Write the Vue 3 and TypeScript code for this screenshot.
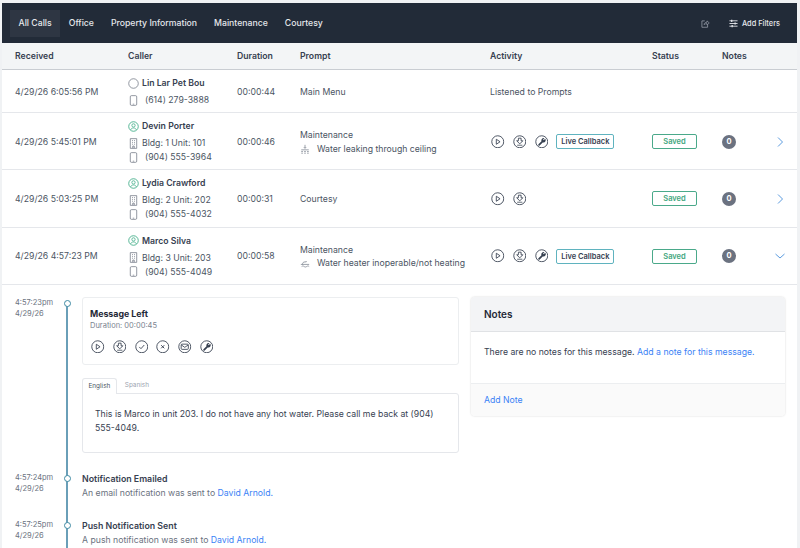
<script setup lang="ts">
type IconName = 'play' | 'download' | 'wrench' | 'check' | 'cross' | 'mail'

interface Call {
  id: number
  received: string
  caller: string
  known: boolean
  unit?: string
  phone: string
  duration: string
  prompt: string
  issue?: string
  issueIcon?: 'leak' | 'heater'
  activityText?: string
  actions: IconName[]
  liveCallback?: boolean
  saved?: boolean
  open?: boolean
}

const tabs = ['All Calls', 'Office', 'Property Information', 'Maintenance', 'Courtesy']
const columns = ['Received', 'Caller', 'Duration', 'Prompt', 'Activity', 'Status', 'Notes']

const calls: Call[] = [
  {
    id: 1,
    received: '4/29/26 6:05:56 PM',
    caller: 'Lin Lar Pet Bou',
    known: false,
    phone: '(614) 279-3888',
    duration: '00:00:44',
    prompt: 'Main Menu',
    activityText: 'Listened to Prompts',
    actions: [],
  },
  {
    id: 2,
    received: '4/29/26 5:45:01 PM',
    caller: 'Devin Porter',
    known: true,
    unit: 'Bldg: 1 Unit: 101',
    phone: '(904) 555-3964',
    duration: '00:00:46',
    prompt: 'Maintenance',
    issue: 'Water leaking through ceiling',
    issueIcon: 'leak',
    actions: ['play', 'download', 'wrench'],
    liveCallback: true,
    saved: true,
  },
  {
    id: 3,
    received: '4/29/26 5:03:25 PM',
    caller: 'Lydia Crawford',
    known: true,
    unit: 'Bldg: 2 Unit: 202',
    phone: '(904) 555-4032',
    duration: '00:00:31',
    prompt: 'Courtesy',
    actions: ['play', 'download'],
    saved: true,
  },
  {
    id: 4,
    received: '4/29/26 4:57:23 PM',
    caller: 'Marco Silva',
    known: true,
    unit: 'Bldg: 3 Unit: 203',
    phone: '(904) 555-4049',
    duration: '00:00:58',
    prompt: 'Maintenance',
    issue: 'Water heater inoperable/not heating',
    issueIcon: 'heater',
    actions: ['play', 'download', 'wrench'],
    liveCallback: true,
    saved: true,
    open: true,
  },
]

const messageActions: IconName[] = ['play', 'download', 'check', 'cross', 'mail', 'wrench']
</script>

<template>
  <div class="page">
    <svg class="defs" width="0" height="0" aria-hidden="true">
      <symbol id="i-play" viewBox="0 0 14 14">
        <circle cx="7" cy="7" r="6.2" fill="none" stroke="currentColor" stroke-width=".9" />
        <path d="M5.5 4.4 9.4 7 5.5 9.6Z" fill="none" stroke="currentColor" stroke-width=".9" stroke-linejoin="round" />
      </symbol>
      <symbol id="i-download" viewBox="0 0 14 14">
        <circle cx="7" cy="7" r="6.2" fill="none" stroke="currentColor" stroke-width=".9" />
        <path d="M5.6 3.3h2.800v2.700h1.800L7 9.200 3.800 6h1.800Z" fill="none" stroke="currentColor" stroke-width=".9" stroke-linejoin="round" />
        <path d="M4.300 10.600h5.400" fill="none" stroke="currentColor" stroke-width=".8" />
      </symbol>
      <symbol id="i-wrench" viewBox="0 0 14 14">
        <circle cx="7" cy="7" r="6.2" fill="none" stroke="currentColor" stroke-width=".9" />
        <path d="M10.600 3.900 9 5.400 8.300 4.800l1.500-1.500a2.400 2.400 0 0 0-3.100 3.100L3.600 9.500a.9.9 0 0 0 1.300 1.300l3.100-3.100a2.400 2.400 0 0 0 2.600-3.800Z" fill="currentColor" />
      </symbol>
      <symbol id="i-check" viewBox="0 0 14 14">
        <circle cx="7" cy="7" r="6.2" fill="none" stroke="currentColor" stroke-width=".9" />
        <path d="M4.400 7.200 6.200 9l3.400-3.800" fill="none" stroke="currentColor" stroke-width=".9" />
      </symbol>
      <symbol id="i-cross" viewBox="0 0 14 14">
        <circle cx="7" cy="7" r="6.2" fill="none" stroke="currentColor" stroke-width=".9" />
        <path d="M5.400 5.400 8.600 8.600M8.600 5.400 5.400 8.600" fill="none" stroke="currentColor" stroke-width="1" />
      </symbol>
      <symbol id="i-mail" viewBox="0 0 14 14">
        <circle cx="7" cy="7" r="6.2" fill="none" stroke="currentColor" stroke-width=".9" />
        <rect x="3.300" y="4.300" width="7.400" height="5.400" rx=".9" fill="none" stroke="currentColor" stroke-width=".9" />
        <path d="M3.500 5.200 7 7.600l3.500-2.400" fill="none" stroke="currentColor" stroke-width=".9" />
      </symbol>
      <symbol id="i-person" viewBox="0 0 12 12">
        <circle cx="6" cy="6" r="5.2" fill="none" stroke="currentColor" stroke-width="1" />
        <circle cx="6" cy="4.800" r="1.800" fill="none" stroke="currentColor" stroke-width=".9" />
        <path d="M2.900 9.600C3.500 8.200 4.600 7.600 6 7.600s2.500.6 3.100 2" fill="none" stroke="currentColor" stroke-width=".9" />
      </symbol>
      <symbol id="i-anon" viewBox="0 0 12 12">
        <circle cx="6" cy="6" r="5.200" fill="none" stroke="currentColor" stroke-width=".8" />
      </symbol>
      <symbol id="i-phone" viewBox="0 0 10 12">
        <rect x="1.500" y=".7" width="7" height="10.600" rx="1.300" fill="none" stroke="currentColor" stroke-width=".8" />
        <path d="M4.200 10h1.600" stroke="currentColor" stroke-width=".7" />
      </symbol>
      <symbol id="i-building" viewBox="0 0 10 12">
        <path d="M1.500.7h7v10.600h-7Z" fill="none" stroke="currentColor" stroke-width=".8" />
        <path d="M3.400 2.800h1M5.600 2.800h1M3.400 4.800h1M5.600 4.800h1M3.400 6.800h1M5.600 6.800h1M4.200 11V8.800h1.600V11" fill="none" stroke="currentColor" stroke-width=".8" />
      </symbol>
      <symbol id="i-leak" viewBox="0 0 12 12">
        <path d="M6 1v4M4.600 3.800 6 5.200l1.400-1.400M1.500 7h9M1.500 9h2M5 9h2M8.500 9h2M1.500 11h2M5 11h2M8.500 11h2" fill="none" stroke="currentColor" stroke-width=".8" />
      </symbol>
      <symbol id="i-heater" viewBox="0 0 12 12">
        <path d="M1 6.500h10M3 6.500C3 4.500 4 3.500 6 3.500h1.500M8 3.500 7 2.500M2 9c1-.8 2-.8 3 0s2 .8 3 0 2-.8 3 0" fill="none" stroke="currentColor" stroke-width=".8" />
      </symbol>
    </svg>

    <main class="panel">
      <nav class="topbar">
        <a v-for="(tab, i) in tabs" :key="tab" class="tab" :class="{ active: i === 0 }">{{ tab }}</a>
        <div class="tools">
          <svg class="share" viewBox="0 0 12 12" width="9" height="9">
            <path d="M5 2.500H1.200v8.500h7.600V7.500" fill="none" stroke="currentColor" />
            <path d="M4 7.500C4.300 5.400 5.800 4.300 8 4.300V2.500l3 2.800-3 2.700V6.200C6.300 6.200 5 6.500 4 7.500Z" fill="none" stroke="currentColor" stroke-width=".9" />
          </svg>
          <a class="filters">
            <svg viewBox="0 0 10 10" width="9" height="9">
              <path d="M.5 2h9M.5 5h9M.5 8h9" stroke="currentColor" />
              <path d="M3 .8v2.400M6.800 3.800v2.400M3.500 6.800v2.400" stroke="currentColor" stroke-width="1.400" />
            </svg>
            Add Filters
          </a>
        </div>
      </nav>

      <div class="row head">
        <span v-for="col in columns" :key="col">{{ col }}</span>
      </div>

      <div v-for="call in calls" :key="call.id" class="row">
        <span>{{ call.received }}</span>
        <div class="caller">
          <div class="name">
            <svg class="person" :class="{ known: call.known }"><use :href="call.known ? '#i-person' : '#i-anon'" /></svg>
            {{ call.caller }}
          </div>
          <div v-if="call.unit" class="line">
            <svg class="small"><use href="#i-building" /></svg>
            {{ call.unit }}
          </div>
          <div class="line">
            <svg class="small"><use href="#i-phone" /></svg>
            <span class="phone">{{ call.phone }}</span>
          </div>
        </div>
        <span>{{ call.duration }}</span>
        <div class="prompt">
          <div>{{ call.prompt }}</div>
          <div v-if="call.issue" class="issue">
            <svg class="issue-icon"><use :href="`#i-${call.issueIcon}`" /></svg>
            {{ call.issue }}
          </div>
        </div>
        <div class="activity">
          <span v-if="call.activityText">{{ call.activityText }}</span>
          <svg v-for="a in call.actions" :key="a" class="action"><use :href="`#i-${a}`" /></svg>
          <span v-if="call.liveCallback" class="badge live">Live Callback</span>
        </div>
        <div><span v-if="call.saved" class="badge saved">Saved</span></div>
        <div><span v-if="call.saved" class="count">0</span></div>
        <div class="chevron">
          <svg v-if="call.saved" viewBox="0 0 12 12" width="12" height="12">
            <path v-if="call.open" d="M1.500 4 6 8l4.500-4" fill="none" stroke="currentColor" />
            <path v-else d="M4 1.500 8.500 6 4 10.500" fill="none" stroke="currentColor" />
          </svg>
        </div>
      </div>

      <section class="detail">
        <div class="timeline">
          <div class="event first">
            <div class="when">4:57:23pm<br />4/29/26</div>
            <div class="rail"><i class="dot" /></div>
            <div>
              <div class="message">
                <h3>Message Left</h3>
                <p class="length">Duration: 00:00:45</p>
                <div class="msg-actions">
                  <svg v-for="a in messageActions" :key="a" class="action"><use :href="`#i-${a}`" /></svg>
                </div>
              </div>
              <div class="lang-tabs">
                <span class="lang active">English</span>
                <span class="lang">Spanish</span>
              </div>
              <div class="transcript">
                This is Marco in unit 203. I do not have any hot water. Please call me back at (904) 555-4049.
              </div>
            </div>
          </div>

          <div class="event">
            <div class="when">4:57:24pm<br />4/29/26</div>
            <div class="rail"><i class="dot" /></div>
            <div class="note">
              <h4>Notification Emailed</h4>
              <p>An email notification was sent to <a>David Arnold.</a></p>
            </div>
          </div>

          <div class="event last">
            <div class="when">4:57:25pm<br />4/29/26</div>
            <div class="rail"><i class="dot" /></div>
            <div class="note">
              <h4>Push Notification Sent</h4>
              <p>A push notification was sent to <a>David Arnold.</a></p>
            </div>
          </div>
        </div>

        <aside class="notes">
          <header>Notes</header>
          <div class="notes-body">
            There are no notes for this message. <a>Add a note for this message.</a>
          </div>
          <footer><a>Add Note</a></footer>
        </aside>
      </section>
    </main>
  </div>
</template>

<style scoped>
.page {
  height: 548px;
  overflow: hidden;
  box-sizing: border-box;
  padding: 3px 3px 0 2px;
  background: #f0f2f4;
  font-family: Inter, "Liberation Sans", sans-serif;
  font-size: 8.7px;
  color: #4b5563;
}

.defs {
  position: absolute;
}

.panel {
  background: #fff;
  height: 100%;
}

.topbar {
  display: flex;
  align-items: center;
  height: 40px;
  padding-left: 8px;
  box-sizing: border-box;
  background: #222b38;
}

.tab {
  padding: 9px 8.5px;
  line-height: 9px;
  font-weight: 500;
  color: #e5e7eb;
}

.tab.active {
  background: #2e3643;
}

.tools {
  display: flex;
  align-items: center;
  gap: 19px;
  margin-left: auto;
  padding-right: 17px;
  color: #9ca3af;
}

.filters {
  display: flex;
  align-items: center;
  gap: 3.5px;
  font-size: 7.4px;
  font-weight: 500;
  color: #e5e7eb;
}

.row {
  display: grid;
  grid-template-columns: 113px 109px 63px 190px 162px 70px 52px 1fr;
  align-items: center;
  padding: 6px 0 5.2px 13px;
  border-bottom: 1px solid #e5e7eb;
}

.row.head {
  padding: 0 0 0 13px;
  height: 27px;
  box-sizing: border-box;
  background: #f3f5f6;
  border-bottom: 1px solid #c9cdd2;
  font-weight: 600;
  color: #374151;
}

.name {
  display: flex;
  align-items: center;
  gap: 3px;
  height: 14px;
  margin-bottom: 3px;
  font-weight: 600;
  color: #374151;
}

.person {
  width: 11px;
  height: 11px;
  color: #6b7280;
}

.person.known {
  color: #48b08c;
}

.line {
  display: flex;
  align-items: center;
  gap: 3px;
  height: 14px;
}

.small {
  width: 11px;
  height: 11px;
  color: #6b7280;
}

.phone {
  margin-left: 3px;
}

.prompt {
  padding-top: 2px;
  line-height: 13.5px;
}

.issue {
  display: flex;
  align-items: center;
  gap: 7px;
}

.issue-icon {
  width: 10px;
  height: 10px;
  color: #6b7280;
}

.activity {
  display: flex;
  align-items: center;
  gap: 8.2px;
}

.action {
  width: 13.5px;
  height: 13.5px;
  color: #374151;
}

.action:first-child {
  margin-left: 1.3px;
}

.badge {
  display: inline-block;
  box-sizing: border-box;
  height: 15px;
  line-height: 13px;
  border: 1px solid;
  border-radius: 2px;
  font-size: 7.5px;
  font-weight: 600;
  text-align: center;
}

.live {
  width: 58px;
  border-color: #5fb3bf;
  color: #374151;
}

.saved {
  display: block;
  width: 45px;
  border-color: #4aa98a;
  color: #3fa67e;
}

.count {
  display: block;
  width: 14px;
  height: 14px;
  line-height: 14px;
  border-radius: 50%;
  background: #6b7280;
  color: #fff;
  font-size: 7.5px;
  font-weight: 700;
  text-align: center;
}

.chevron {
  display: flex;
  color: #5b9bdf;
}

.detail {
  display: grid;
  grid-template-columns: 444px 314px;
  column-gap: 12px;
  padding: 12px 0 0 13px;
}

.event {
  display: grid;
  grid-template-columns: 52px 15px 1fr;
  padding-top: 19px;
}

.event.first {
  padding-top: 0;
}

.event.last {
  padding-bottom: 30px;
}

.when {
  font-size: 7.5px;
  line-height: 11.5px;
  color: #6b7280;
}

.rail {
  position: relative;
  margin-top: -19px;
}

.event.last .rail {
  margin-bottom: -30px;
}

.rail::before {
  content: "";
  position: absolute;
  top: 0;
  bottom: 0;
  left: -1px;
  width: 2px;
  background: #6a9fb8;
}

.first .rail {
  margin-top: 6px;
}

.dot {
  position: absolute;
  top: 22px;
  left: -3.5px;
  width: 7px;
  height: 7px;
  box-sizing: border-box;
  border: 1.5px solid #3f8aa3;
  border-radius: 50%;
  background: #fff;
}

.first .dot {
  top: -3px;
}

.message {
  height: 68px;
  box-sizing: border-box;
  padding: 10px 7px 0;
  border: 1px solid #eceef0;
  border-radius: 3px;
}

h3,
h4,
p {
  margin: 0;
}

h3 {
  font-size: 8.8px;
  line-height: 11px;
  font-weight: 700;
  color: #1f2937;
}

.length {
  margin-top: 2px;
  font-size: 7.5px;
  line-height: 10px;
  color: #7b8490;
}

.msg-actions {
  display: flex;
  gap: 8.2px;
  margin-top: 9px;
}

.lang-tabs {
  display: flex;
  margin-top: 13px;
  height: 15px;
}

.lang {
  padding: 0 8px;
  line-height: 15px;
  font-size: 6.4px;
  color: #9ca3af;
}

.lang.active {
  position: relative;
  z-index: 1;
  height: 16px;
  border: 1px solid #e5e7eb;
  border-bottom: 0;
  border-radius: 3px 3px 0 0;
  box-sizing: border-box;
  background: #fff;
  padding: 0 5.5px;
  color: #4b5563;
}

.transcript {
  height: 60px;
  box-sizing: border-box;
  padding: 13px 12px;
  border: 1px solid #e5e7eb;
  border-radius: 0 3px 3px 3px;
  line-height: 14px;
  color: #374151;
}

.note h4 {
  font-size: 8.8px;
  line-height: 13px;
  font-weight: 600;
  color: #374151;
}

.note p {
  margin: 1px 0 0;
  line-height: 14px;
  color: #6b7280;
}

a {
  color: #3b82f6;
}

.notes {
  align-self: start;
  height: 119px;
  box-sizing: border-box;
  display: flex;
  flex-direction: column;
  border-radius: 4px;
  box-shadow: 0 0 2px rgba(0, 0, 0, 0.18);
  overflow: hidden;
}

.notes header {
  height: 35px;
  line-height: 34px;
  padding-left: 13px;
  box-sizing: border-box;
  background: #f3f4f6;
  border-bottom: 1px solid #e0e2e5;
  font-size: 10px;
  font-weight: 600;
  color: #1f2937;
}

.notes-body {
  flex: 1;
  padding: 13px;
  line-height: 14px;
  color: #374151;
}

.notes footer {
  height: 33px;
  line-height: 32px;
  padding-left: 13px;
  box-sizing: border-box;
  background: #fafafa;
  border-top: 1px solid #eceef0;
}
</style>

<style>
html,
body {
  margin: 0;
  overflow: hidden;
}
</style>
